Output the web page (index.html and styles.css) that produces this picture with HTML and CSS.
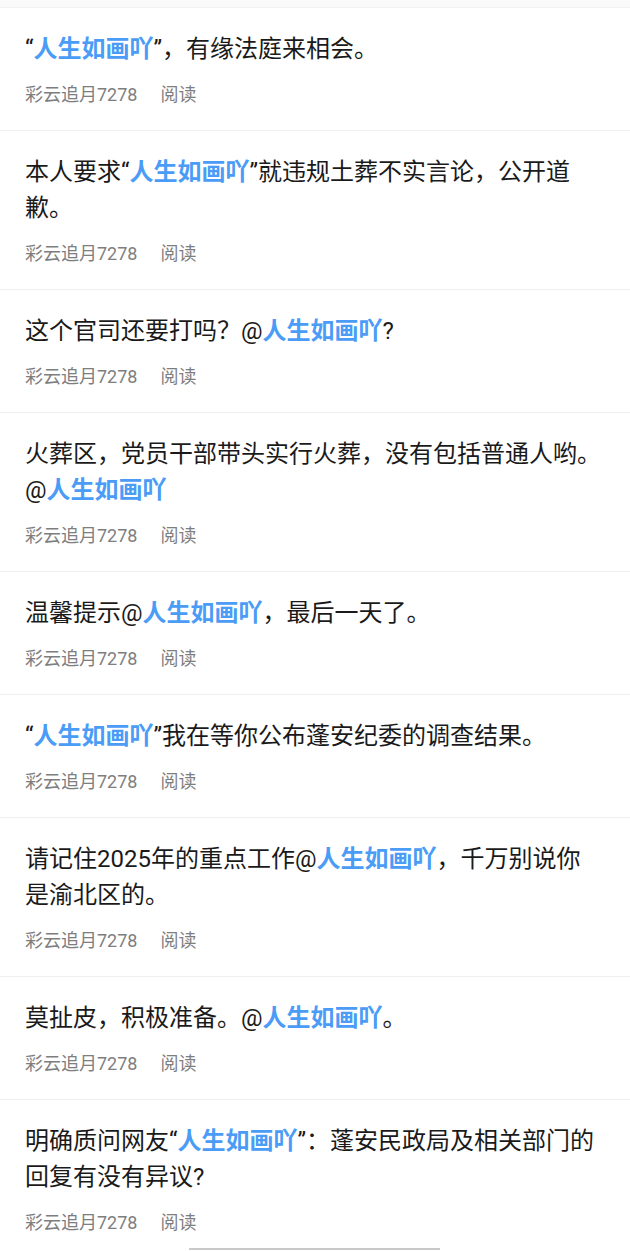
FILE: index.html
```html
<!DOCTYPE html>
<html lang="zh-CN">
<head>
<meta charset="utf-8">
<title>评论列表</title>
<link rel="stylesheet" href="styles.css">
</head>
<body>
<div class="top-edge"></div>
<ul class="list">
  <li class="item">
    <p class="text">“<span class="at">人生如画吖</span>”，有缘法庭来相会。</p>
    <div class="meta"><span class="author">彩云追月7278</span><span class="read">阅读</span></div>
  </li>
  <li class="item">
    <p class="text">本人要求“<span class="at">人生如画吖</span>”就违规土葬不实言论，公开道歉。</p>
    <div class="meta"><span class="author">彩云追月7278</span><span class="read">阅读</span></div>
  </li>
  <li class="item">
    <p class="text">这个官司还要打吗？@<span class="at">人生如画吖</span>?</p>
    <div class="meta"><span class="author">彩云追月7278</span><span class="read">阅读</span></div>
  </li>
  <li class="item">
    <p class="text">火葬区，党员干部带头实行火葬，没有包括普通人哟。@<span class="at">人生如画吖</span></p>
    <div class="meta"><span class="author">彩云追月7278</span><span class="read">阅读</span></div>
  </li>
  <li class="item">
    <p class="text">温馨提示@<span class="at">人生如画吖</span>，最后一天了。</p>
    <div class="meta"><span class="author">彩云追月7278</span><span class="read">阅读</span></div>
  </li>
  <li class="item">
    <p class="text">“<span class="at">人生如画吖</span>”我在等你公布蓬安纪委的调查结果。</p>
    <div class="meta"><span class="author">彩云追月7278</span><span class="read">阅读</span></div>
  </li>
  <li class="item">
    <p class="text">请记住2025年的重点工作@<span class="at">人生如画吖</span>，千万别说你是渝北区的。</p>
    <div class="meta"><span class="author">彩云追月7278</span><span class="read">阅读</span></div>
  </li>
  <li class="item">
    <p class="text">莫扯皮，积极准备。@<span class="at">人生如画吖</span>。</p>
    <div class="meta"><span class="author">彩云追月7278</span><span class="read">阅读</span></div>
  </li>
  <li class="item">
    <p class="text">明确质问网友“<span class="at">人生如画吖</span>”：蓬安民政局及相关部门的回复有没有异议?</p>
    <div class="meta"><span class="author">彩云追月7278</span><span class="read">阅读</span></div>
  </li>
</ul>
<div class="home-bar"></div>
</body>
</html>
```
FILE: styles.css
```css
html, body {
  margin: 0;
  padding: 0;
  background: #ffffff;
  overflow: hidden;
}
body {
  font-family: Roboto, "Noto Sans CJK SC", sans-serif;
  color: #1a1a1a;
}
.top-edge {
  height: 7px;
  background: #fafafa;
  border-bottom: 1px solid #f2f2f2;
}
.list {
  list-style: none;
  margin: 0;
  padding: 0;
}
.item {
  display: flex;
  flex-direction: column;
  gap: 16px;
  padding: 23px 28px 23px 25px;
  border-bottom: 1px solid #efefef;
}
.text {
  margin: 0;
  font-size: 24px;
  line-height: 36px;
}
.at {
  color: #4a9cf6;
  font-weight: 700;
}
.meta {
  display: flex;
  gap: 23px;
  font-size: 18px;
  line-height: 24px;
  color: #7e7e7e;
}
.home-bar {
  position: fixed;
  left: 189px;
  bottom: 1px;
  width: 251px;
  height: 2px;
  background: #c9c9c9;
}
```
